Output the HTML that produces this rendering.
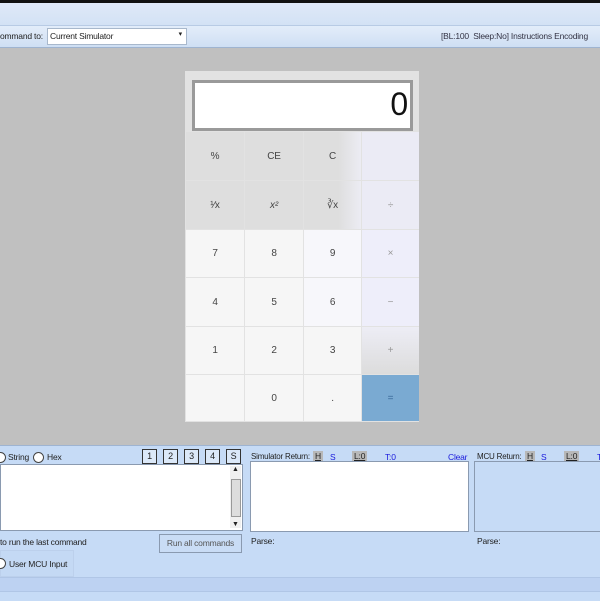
<html><head><style>
body{margin:0;width:600px;height:600px;position:relative;overflow:hidden;background:#c0c0c0;font-family:"Liberation Sans",sans-serif;font-size:8.5px;color:#222;letter-spacing:-0.2px}
.a{position:absolute;white-space:nowrap}
.b{position:absolute;display:flex;align-items:center;justify-content:center;font-family:"Liberation Sans Narrow","Liberation Sans",sans-serif;font-size:10px;color:#444;transform-origin:center}
.s{position:absolute;border:1px solid #333;background:#dbe8f8;width:13px;height:13px;font-size:9px;text-align:center;line-height:13px}
.u{position:absolute;color:#1a1adc;text-decoration:underline}
.g{position:absolute;background:#b8b8b8;padding:0 2px;text-decoration:underline}
</style></head><body>
<div class="a" style="left:0;top:0;width:600px;height:3px;background:#111"></div>
<div class="a" style="left:0;top:3px;width:600px;height:22px;background:linear-gradient(#dfe9f8,#d3e2f5)"></div>
<div class="a" style="left:0;top:25px;width:600px;height:21px;background:linear-gradient(#e3edfa,#cfdff3);border-top:1px solid #b8cbe5;border-bottom:1px solid #9fb4d0"></div>
<div class="a" style="left:0;top:31px">ommand to:</div>
<div class="a" style="left:47px;top:28px;width:138px;height:15px;background:#fff;border:1px solid #a8b8cc"><span style="position:absolute;left:2px;top:2px">Current Simulator</span><span style="position:absolute;right:4px;top:1px;font-size:7px">▾</span></div>
<div class="a" style="left:441px;top:31px;color:#334">[BL:100&nbsp; Sleep:No] Instructions Encoding</div>

<div class="a" style="left:185px;top:71px;width:234px;height:351px;background:#e2e2e2"></div>
<div class="a" style="left:192px;top:80px;width:215px;height:45px;background:#fff;border:3px solid #9a9a9a"><span style="position:absolute;right:2px;top:3px;font-size:32px;color:#111">0</span></div>
<div class="b" style="left:186px;top:132px;width:58px;height:48px;background:#dedede">%</div>
<div class="b" style="left:245px;top:132px;width:58px;height:48px;background:#dedede">CE</div>
<div class="b" style="left:304px;top:132px;width:57px;height:48px;background:linear-gradient(90deg,#dedede 60%,#ececf3)">C</div>
<div class="b" style="left:362px;top:132px;width:57px;height:48px;background:#ebebf5"></div>
<div class="b" style="left:186px;top:181px;width:58px;height:48px;background:#dedede">¹⁄x</div>
<div class="b" style="left:245px;top:181px;width:58px;height:48px;background:#dedede"><i>x²</i></div>
<div class="b" style="left:304px;top:181px;width:57px;height:48px;background:linear-gradient(90deg,#dedede 60%,#ececf3)">∛x</div>
<div class="b" style="left:362px;top:181px;width:57px;height:48px;background:#ebebf5;color:#999">÷</div>
<div class="b" style="left:186px;top:230px;width:58px;height:47px;background:#f6f6f6">7</div>
<div class="b" style="left:245px;top:230px;width:58px;height:47px;background:#f6f6f6">8</div>
<div class="b" style="left:304px;top:230px;width:57px;height:47px;background:#f7f7fb">9</div>
<div class="b" style="left:362px;top:230px;width:57px;height:47px;background:#eeeefa;color:#999">×</div>
<div class="b" style="left:186px;top:278px;width:58px;height:48px;background:#f6f6f6">4</div>
<div class="b" style="left:245px;top:278px;width:58px;height:48px;background:#f6f6f6">5</div>
<div class="b" style="left:304px;top:278px;width:57px;height:48px;background:#f7f7fb">6</div>
<div class="b" style="left:362px;top:278px;width:57px;height:48px;background:#eeeefa;color:#999">−</div>
<div class="b" style="left:186px;top:327px;width:58px;height:47px;background:#f6f6f6">1</div>
<div class="b" style="left:245px;top:327px;width:58px;height:47px;background:#f6f6f6">2</div>
<div class="b" style="left:304px;top:327px;width:57px;height:47px;background:#f6f6f6">3</div>
<div class="b" style="left:362px;top:327px;width:57px;height:47px;background:linear-gradient(#ededf5,#dcdcdc);color:#999">+</div>
<div class="b" style="left:186px;top:375px;width:58px;height:46px;background:#f6f6f6"></div>
<div class="b" style="left:245px;top:375px;width:58px;height:46px;background:#f6f6f6">0</div>
<div class="b" style="left:304px;top:375px;width:57px;height:46px;background:#f6f6f6">.</div>
<div class="b" style="left:362px;top:375px;width:57px;height:46px;background:#7aaad2;color:#3a6a9a">=</div>

<div class="a" style="left:0;top:445px;width:600px;height:155px;background:#c6dbf6;border-top:1px solid #9eb4d2"></div>
<div class="a" style="left:-5px;top:452px;width:9px;height:9px;border:1px solid #444;border-radius:50%;background:#fff"></div>
<div class="a" style="left:8px;top:452px">String</div>
<div class="a" style="left:33px;top:452px;width:9px;height:9px;border:1px solid #444;border-radius:50%;background:#fff"></div>
<div class="a" style="left:47px;top:452px">Hex</div>
<div class="s" style="left:142px;top:449px">1</div>
<div class="s" style="left:163px;top:449px">2</div>
<div class="s" style="left:184px;top:449px">3</div>
<div class="s" style="left:205px;top:449px">4</div>
<div class="s" style="left:226px;top:449px">S</div>
<div class="a" style="left:0;top:464px;width:241px;height:65px;background:#fff;border:1px solid #8a9ab0"></div>
<div class="a" style="left:230px;top:466px;width:11px;height:62px;background:#f0f0f0"><div style="position:absolute;left:1px;top:13px;width:8px;height:36px;background:#ddd;border:1px solid #999"></div><div style="position:absolute;top:0;left:2px;font-size:7px">▲</div><div style="position:absolute;bottom:0;left:2px;font-size:7px">▼</div></div>
<div class="a" style="left:0;top:537px">to run the last command</div>
<div class="a" style="left:159px;top:534px;width:81px;height:17px;border:1px solid #8a9ab0;background:#c9dcf5;text-align:center;line-height:17px;color:#555">Run all commands</div>
<div class="a" style="left:0;top:550px;width:72px;height:25px;background:#c4d9f4;border:1px solid #bcd0ec"></div>
<div class="a" style="left:-5px;top:558px;width:9px;height:9px;border:1px solid #444;border-radius:50%;background:#fff"></div>
<div class="a" style="left:9px;top:559px">User MCU Input</div>
<div class="a" style="left:0;top:577px;width:600px;height:13px;background:#bdd2f2;border-top:1px solid #b0c6e6;border-bottom:1px solid #b0c6e6"></div>

<div class="a" style="left:251px;top:452px;font-size:8px">Simulator Return:</div>
<div class="g" style="left:313px;top:451px">H</div>
<div class="u" style="left:330px;top:452px">S</div>
<div class="g" style="left:352px;top:451px">L:0</div>
<div class="u" style="left:385px;top:452px">T:0</div>
<div class="u" style="left:448px;top:452px">Clear</div>
<div class="a" style="left:250px;top:461px;width:217px;height:69px;background:#fff;border:1px solid #8a9ab0"></div>
<div class="a" style="left:251px;top:536px">Parse:</div>
<div class="a" style="left:477px;top:452px;font-size:8px">MCU Return:</div>
<div class="g" style="left:525px;top:451px">H</div>
<div class="u" style="left:541px;top:452px">S</div>
<div class="g" style="left:564px;top:451px">L:0</div>
<div class="u" style="left:597px;top:452px">T</div>
<div class="a" style="left:474px;top:461px;width:130px;height:69px;background:#c6dbf6;border:1px solid #8a9ab0"></div>
<div class="a" style="left:477px;top:536px">Parse:</div>
</body></html>
